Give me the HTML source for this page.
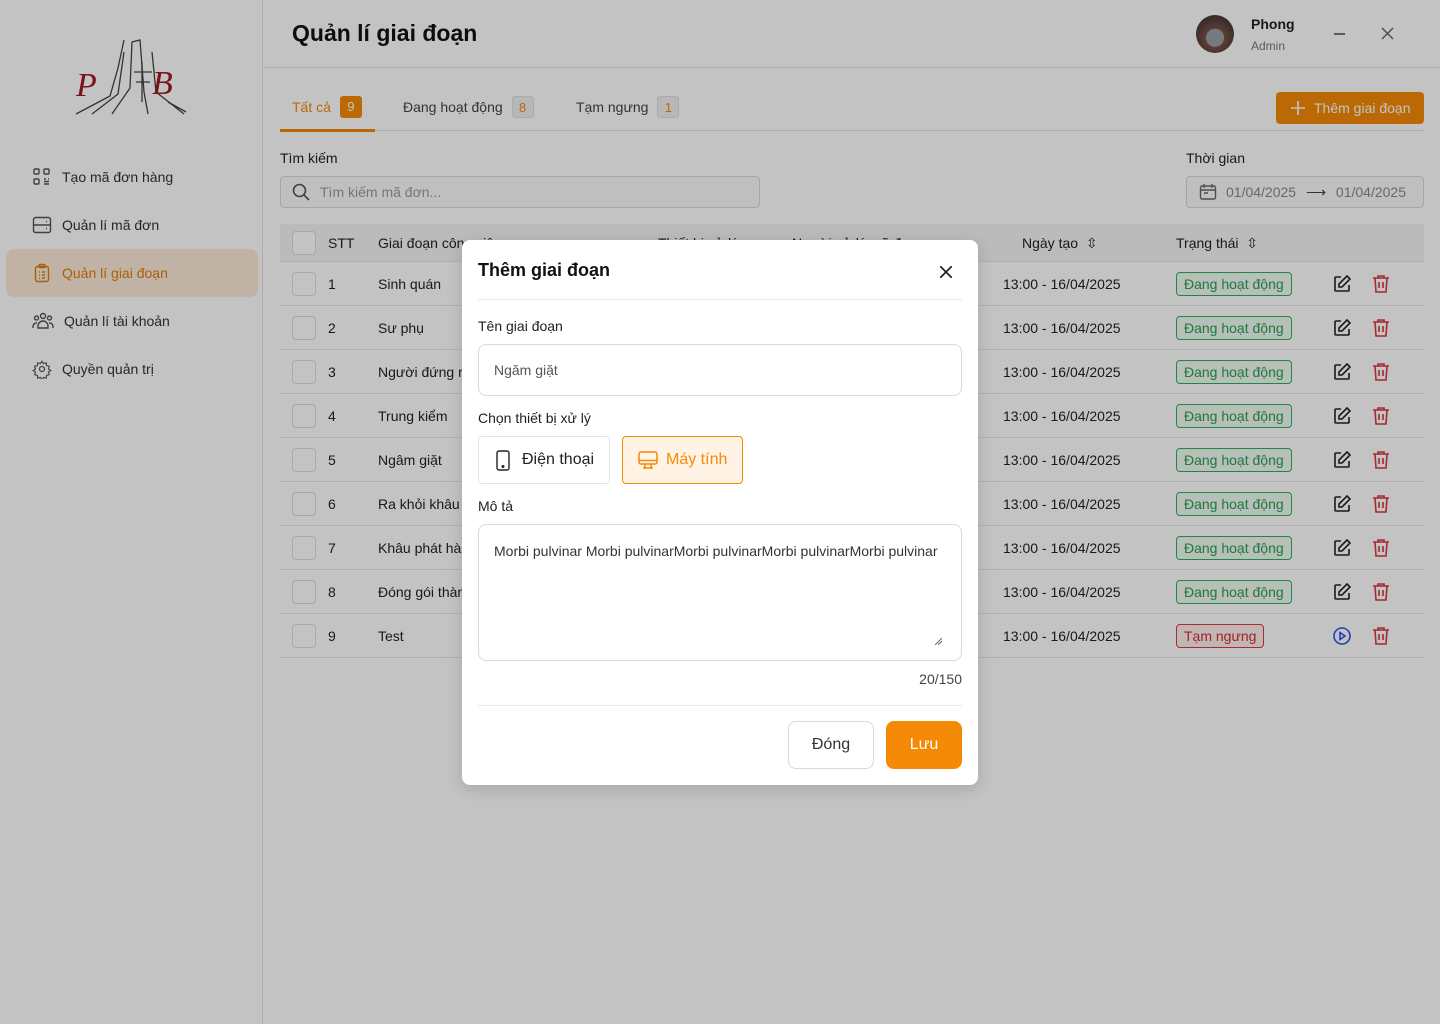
<!DOCTYPE html>
<html><head><meta charset="utf-8"><style>
*{box-sizing:border-box;margin:0;padding:0}
body{width:1440px;height:1024px;overflow:hidden;font-family:"Liberation Sans",sans-serif;background:#fff;color:#1f1f1f;position:relative;font-size:14px}
.side{position:absolute;left:0;top:0;width:263px;height:1024px;border-right:1px solid #e4e4e4;background:#fff}
.nav{position:absolute;left:6px;width:252px;height:48px;display:flex;align-items:center;padding-left:26px;font-size:14px;color:#333;border-radius:8px}
.nav svg{margin-right:10px}
.nav.act{background:#fbe9d7;color:#e07d0c}
.hdr{position:absolute;left:264px;top:0;right:0;height:68px;border-bottom:1px solid #e4e4e4}
.abs{position:absolute}
.tab{position:absolute;top:96px;font-size:14px;color:#444;display:flex;align-items:center}
.badge{display:inline-block;width:22px;height:22px;border-radius:3px;margin-left:9px;text-align:center;line-height:22px;font-size:13px}
.row{position:absolute;left:280px;width:1144px;height:44px;border-bottom:1px solid #e8e8e8}
.cb{position:absolute;left:12px;top:10px;width:24px;height:24px;border:1px solid #dcdcdc;border-radius:4px;background:#fff}
.row span{position:absolute;top:14px;font-size:14px;color:#222}
.chip{position:absolute;left:896px;top:10px;height:24px;border:1px solid #2fae5a;color:#2a9d50;background:#eefaf1;border-radius:4px;padding:0 7px;line-height:22px;font-size:14px}
.chip.r{border-color:#dd3b3b;color:#d12d2d;background:#fdeeee}
.ic{position:absolute;top:12px}
.ov{position:absolute;left:0;top:0;width:1440px;height:1024px;background:rgba(0,0,0,0.235)}
.modal{position:absolute;left:462px;top:240px;width:516px;height:545px;background:#fff;border-radius:8px;box-shadow:0 4px 16px rgba(0,0,0,.15)}
.lbl{position:absolute;left:16px;font-size:14px;color:#1f1f1f}
.inp{position:absolute;left:16px;width:484px;border:1px solid #d9d9d9;border-radius:8px}
</style></head><body>
<div class="side">
 <svg class="abs" style="left:72px;top:32px" width="118" height="86" viewBox="0 0 118 86">
  <g stroke="#444" fill="none" stroke-width="1.3">
   <path d="M4 82 L38 64 L46 36 L52 8"/><path d="M20 82 L46 62 L52 20"/><path d="M40 82 L58 56 L60 10 L68 8 L72 60 L76 82"/>
   <path d="M62 40 L80 40 M64 50 L78 50 M70 30 L70 70"/><path d="M80 20 L84 60 L112 82"/><path d="M96 70 L114 80"/>
  </g>
  <text x="4" y="64" font-family="Liberation Serif" font-style="italic" font-size="34" fill="#9c1c22">P</text>
  <text x="80" y="62" font-family="Liberation Serif" font-style="italic" font-size="34" fill="#9c1c22">B</text>
 </svg>
 <div class="nav" style="top:153px"><svg width="20" height="20" viewBox="0 0 20 20" fill="none" stroke="#555" stroke-width="1.4"><rect x="2" y="2" width="5" height="5" rx="1"/><rect x="12" y="2" width="5" height="5" rx="1"/><rect x="2" y="12" width="5" height="5" rx="1"/><path d="M12 12h2M16 12h1M12 17h5M12 14.5h5"/></svg>Tạo mã đơn hàng</div>
 <div class="nav" style="top:201px"><svg width="20" height="20" viewBox="0 0 20 20" fill="none" stroke="#555" stroke-width="1.4"><rect x="1.5" y="2.5" width="17" height="15" rx="2"/><path d="M1.5 10h17M14 6.5h1M14 13.5h1"/></svg>Quản lí mã đơn</div>
 <div class="nav act" style="top:249px"><svg width="20" height="20" viewBox="0 0 20 20" fill="none" stroke="#e07d0c" stroke-width="1.4"><rect x="3.5" y="3.5" width="13" height="15" rx="2"/><rect x="7" y="1.5" width="6" height="3" rx="1"/><path d="M7 9h1M10 9h3M7 12h1M10 12h3M7 15h1M10 15h3"/></svg>Quản lí giai đoạn</div>
 <div class="nav" style="top:297px"><svg width="22" height="20" viewBox="0 0 22 20" fill="none" stroke="#555" stroke-width="1.4"><circle cx="11" cy="5" r="2.5"/><circle cx="4.5" cy="7" r="2"/><circle cx="17.5" cy="7" r="2"/><path d="M6 17v-2a5 5 0 0110 0v2zM1 17v-1.5a3.5 3.5 0 014-3.5M21 17v-1.5a3.5 3.5 0 00-4-3.5"/></svg>Quản lí tài khoản</div>
 <div class="nav" style="top:345px"><svg width="20" height="20" viewBox="0 0 24 24" fill="none" stroke="#555" stroke-width="1.5"><circle cx="12" cy="12" r="3"/><path d="M12 2l2 3 3.5-1 .5 3.5 3.5 1-1 3.5 3 2-3 2 1 3.5-3.5 1-.5 3.5-3.5-1-2 3-2-3-3.5 1-.5-3.5-3.5-1 1-3.5-3-2 3-2-1-3.5 3.5-1 .5-3.5 3.5 1z" transform="scale(.92) translate(1 1)"/></svg>Quyền quản trị</div>
</div>
<div class="hdr">
 <div class="abs" style="left:28px;top:20px;font-size:23px;font-weight:bold;color:#111">Quản lí giai đoạn</div>
 <div class="abs" style="left:932px;top:15px;width:38px;height:38px;border-radius:50%;background:radial-gradient(circle at 50% 60%,#9aa0a6 0 30%,#7a5046 31%,#4a3a36 70%)"></div>
 <div class="abs" style="left:987px;top:16px;font-size:14px;font-weight:bold;color:#222">Phong</div>
 <div class="abs" style="left:987px;top:39px;font-size:12px;color:#777">Admin</div>
 <div class="abs" style="left:1070px;top:33px;width:11px;height:1.5px;background:#777"></div>
 <svg class="abs" style="left:1117px;top:27px" width="13" height="13" viewBox="0 0 13 13" stroke="#666" stroke-width="1.5"><path d="M1 1l11 11M12 1L1 12"/></svg>
</div>
<div class="abs" style="left:280px;top:130px;width:1144px;height:1px;background:#e4e4e4"></div>
<div class="abs" style="left:280px;top:129px;width:95px;height:3px;background:#f58a07"></div>
<div class="tab" style="left:292px;color:#f58a07">Tất cả<span class="badge" style="background:#f58a07;color:#fff">9</span></div>
<div class="tab" style="left:403px">Đang hoạt động<span class="badge" style="background:#f0f0f0;color:#f58a07;border:1px solid #e0e0e0">8</span></div>
<div class="tab" style="left:576px">Tạm ngưng<span class="badge" style="background:#f0f0f0;color:#f58a07;border:1px solid #e0e0e0">1</span></div>
<div class="abs" style="left:1276px;top:92px;width:148px;height:32px;background:#f58a07;border-radius:4px;color:#fff;font-size:14px;line-height:32px;padding-left:38px">Thêm giai đoạn</div>
<svg class="abs" style="left:1291px;top:101px" width="14" height="14" stroke="#fff" stroke-width="1.6"><path d="M7 0v14M0 7h14"/></svg>
<div class="abs" style="left:280px;top:150px;font-size:14px">Tìm kiếm</div>
<div class="abs" style="left:280px;top:176px;width:480px;height:32px;border:1px solid #d9d9d9;border-radius:4px;background:#fafafa;color:#999;padding-left:39px;line-height:30px">Tìm kiếm mã đơn...</div>
<svg class="abs" style="left:292px;top:183px" width="18" height="18" fill="none" stroke="#555" stroke-width="1.6"><circle cx="7.5" cy="7.5" r="6"/><path d="M12 12l5 5"/></svg>
<div class="abs" style="left:1186px;top:150px;font-size:14px">Thời gian</div>
<div class="abs" style="left:1186px;top:176px;width:238px;height:32px;border:1px solid #d9d9d9;border-radius:4px;background:#fafafa;color:#888;line-height:30px;font-size:14px;padding-left:39px">01/04/2025 <span style="color:#444;margin:0 6px">⟶</span> 01/04/2025</div>
<svg class="abs" style="left:1199px;top:183px" width="18" height="18" fill="none" stroke="#666" stroke-width="1.4"><rect x="1.5" y="3" width="15" height="13" rx="1.5"/><path d="M1.5 7h15M5 1v4M13 1v4M5 10h4"/></svg>
<div class="row" style="top:224px;height:38px;background:#f5f5f5"><div class="cb" style="top:7px"></div>
<span style="left:48px;top:11px;font-weight:500">STT</span><span style="left:98px;top:11px">Giai đoạn công việc</span><span style="left:378px;top:11px">Thiết bị xử lý</span><span style="left:512px;top:11px">Người xử lý mã đơn</span><span style="left:742px;top:11px">Ngày tạo&nbsp;&nbsp;⇳</span><span style="left:896px;top:11px">Trạng thái&nbsp;&nbsp;⇳</span></div>
<div id="rows"></div>
<script>
var names=["Sinh quán","Sư phụ","Người đứng máy","Trung kiểm","Ngâm giặt","Ra khỏi khâu","Khâu phát hành","Đóng gói thành phẩm","Test"];
var h="";
var edit='<svg class="ic" style="left:1052px" width="20" height="20" viewBox="0 0 20 20" fill="none" stroke="#222" stroke-width="1.6"><path d="M9 3H4a1 1 0 00-1 1v12a1 1 0 001 1h12a1 1 0 001-1v-5"/><path d="M15 2l3 3-8 8H7v-3z"/></svg>';
var del='<svg class="ic" style="left:1092px" width="18" height="20" viewBox="0 0 18 20" fill="none" stroke="#d9363e" stroke-width="1.6"><path d="M1 4h16M6 4V2h6v2M3 4l1 14h10l1-14M7 8v6M11 8v6"/></svg>';
var play='<svg class="ic" style="left:1052px" width="20" height="20" viewBox="0 0 20 20" fill="none" stroke="#2f54eb" stroke-width="1.6"><circle cx="10" cy="10" r="8"/><path d="M8 6.5v7l5-3.5z"/></svg>';
for(var i=0;i<9;i++){h+='<div class="row" style="top:'+(262+i*44)+'px"><div class="cb"></div><span style="left:48px">'+(i+1)+'</span><span style="left:98px">'+names[i]+'</span><span style="left:723px">13:00 - 16/04/2025</span>'+(i<8?'<div class="chip">Đang hoạt động</div>'+edit:'<div class="chip r">Tạm ngưng</div>'+play)+del+'</div>';}
document.getElementById("rows").innerHTML=h;
</script>
<div class="ov"></div>
<div class="modal">
 <div class="abs" style="left:16px;top:20px;font-size:18px;font-weight:bold;color:#111">Thêm giai đoạn</div>
 <svg class="abs" style="left:478px;top:26px" width="12" height="12" stroke="#222" stroke-width="1.7"><path d="M0 0l12 12M12 0L0 12"/></svg>
 <div class="abs" style="left:16px;top:59px;width:484px;height:1px;background:#ebebeb"></div>
 <div class="lbl" style="top:78px">Tên giai đoạn</div>
 <div class="inp" style="top:104px;height:52px;padding:17px 15px;color:#555">Ngăm giặt</div>
 <div class="lbl" style="top:170px">Chọn thiết bị xử lý</div>
 <div class="abs" style="left:16px;top:196px;width:132px;height:48px;border:1px solid #e3e3e3;border-radius:4px;font-size:16px;line-height:46px;padding-left:43px;color:#222">Điện thoại</div>
 <svg class="abs" style="left:34px;top:210px" width="14" height="21" fill="none" stroke="#222" stroke-width="1.4"><rect x="1" y="1" width="12" height="19" rx="2"/><circle cx="7" cy="16.5" r=".8" fill="#222"/></svg>
 <div class="abs" style="left:160px;top:196px;width:121px;height:48px;border:1px solid #f58a07;background:#fff3e6;border-radius:4px;font-size:16px;line-height:46px;padding-left:43px;color:#f58a07">Máy tính</div>
 <svg class="abs" style="left:176px;top:211px" width="20" height="18" fill="none" stroke="#f58a07" stroke-width="1.5"><rect x="1" y="1" width="18" height="12" rx="2"/><path d="M1 9.5h18M7 13v3.5M13 13v3.5M5 17h10"/></svg>
 <div class="lbl" style="top:258px">Mô tả</div>
 <div class="inp" style="top:284px;height:137px;padding:18px 15px;color:#333;font-size:14px">Morbi pulvinar Morbi pulvinarMorbi pulvinarMorbi pulvinarMorbi pulvinar</div>
 <svg class="abs" style="left:473px;top:398px" width="7" height="7" stroke="#666" stroke-width="1"><path d="M0 7L7 0M3 7l4-4"/></svg>
 <div class="abs" style="right:16px;top:431px;font-size:14px;color:#444">20/150</div>
 <div class="abs" style="left:16px;top:465px;width:484px;height:1px;background:#ebebeb"></div>
 <div class="abs" style="left:326px;top:481px;width:86px;height:48px;border:1px solid #d9d9d9;border-radius:8px;text-align:center;line-height:46px;font-size:16px;color:#333">Đóng</div>
 <div class="abs" style="left:424px;top:481px;width:76px;height:48px;background:#f58a07;border-radius:8px;text-align:center;line-height:48px;font-size:16px;color:#fff">Lưu</div>
</div>
</body></html>
